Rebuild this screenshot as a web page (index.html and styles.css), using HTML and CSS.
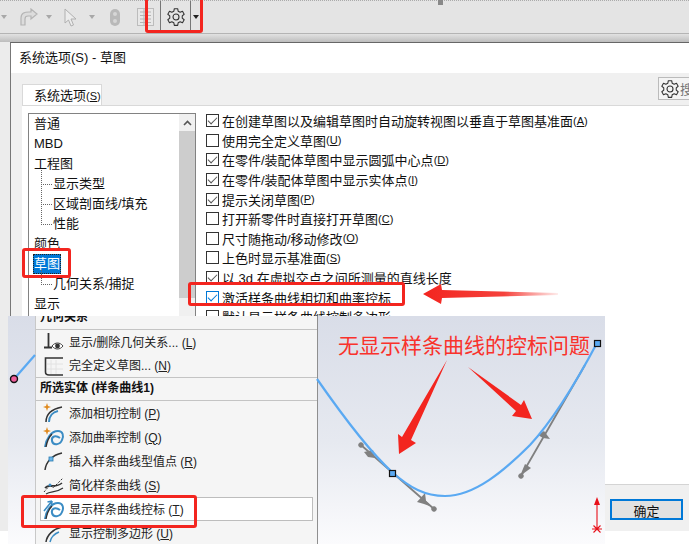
FILE: index.html
```html
<!DOCTYPE html>
<html lang="zh-CN">
<head>
    <meta charset="UTF-8">
    <title>系统选项(S) - 草图</title>
    <link rel="stylesheet" href="styles.css">
</head>
<body>
    <div class="desktop">
        <div class="toolbar">
            <span class="caret caret-first"></span>
            <svg class="tool tool-redo" width="20" height="18" viewBox="0 0 20 18">
                <path d="M3 17 V10 C3 5 7 4 11 4 H13 V1 L19 6 L13 11 V8 H10 C8 8 7 9 7 11 V17 Z" fill="#dcdcdc" stroke="#b4b4b4" stroke-width="1.2"/>
            </svg>
            <span class="caret caret-redo"></span>
            <svg class="tool tool-cursor" width="14" height="19" viewBox="0 0 14 19">
                <path d="M1 1 V15 L4.5 12 L7 18 L9.5 17 L7 11 H12 Z" fill="#ececec" stroke="#b0b0b0"/>
            </svg>
            <span class="caret caret-cursor"></span>
            <span class="pill"><i></i><i></i></span>
            <svg class="tool tool-list" width="17" height="18" viewBox="0 0 17 18">
                <rect x="0.5" y="0.5" width="16" height="17" fill="#e8e8e8" stroke="#bcbcbc"/>
                <path d="M3 4 H14 M3 7.5 H14 M3 11 H14 M3 14.5 H14 M7 1 V17" stroke="#b4b4b4" fill="none"/>
            </svg>
            <span class="tool-split">
                <svg width="20" height="20" viewBox="0 0 24 24">
                    <use href="#gear"/>
                </svg>
            </span>
            <span class="caret caret-dark"></span>
            <span class="ruler-tick"></span>
        </div>
        <div class="shade"></div>

        <div class="dialog">
            <div class="titlebar">系统选项(S) - 草图</div>
            <div class="tabs">
                <div class="tab">系统选项<small>(<u>S</u>)</small></div>
                <div class="search">
                    <svg width="20" height="20" viewBox="0 0 24 24">
                        <use href="#gear"/>
                    </svg>
                    <span>搜</span>
                </div>
            </div>
            <div class="page">
                <div class="tree">
                    <div class="tree-rows">
                        <div class="node">普通</div>
                        <div class="node">MBD</div>
                        <div class="node">工程图</div>
                        <div class="node child first">显示类型</div>
                        <div class="node child">区域剖面线/填充</div>
                        <div class="node child">性能</div>
                        <div class="node">颜色</div>
                        <div class="node"><span class="selected">草图</span></div>
                        <div class="node child only">几何关系/捕捉</div>
                        <div class="node">显示</div>
                        <div class="node">选择</div>
                    </div>
                    <div class="scrollbar">
                        <div class="scroll-up">
                            <svg width="9" height="6" viewBox="0 0 9 6"><path d="M1 5 L4.5 1.5 L8 5" fill="none" stroke="#555" stroke-width="1.6"/></svg>
                        </div>
                        <div class="scroll-thumb"></div>
                    </div>
                </div>
                <div class="options">
                    <div class="option"><span class="box on"></span>在创建草图以及编辑草图时自动旋转视图以垂直于草图基准面<small>(<u>A</u>)</small></div>
                    <div class="option"><span class="box"></span>使用完全定义草图<small>(<u>U</u>)</small></div>
                    <div class="option"><span class="box on"></span>在零件/装配体草图中显示圆弧中心点<small>(<u>D</u>)</small></div>
                    <div class="option"><span class="box on"></span>在零件/装配体草图中显示实体点<small>(<u>I</u>)</small></div>
                    <div class="option"><span class="box on"></span>提示关闭草图<small>(<u>P</u>)</small></div>
                    <div class="option"><span class="box"></span>打开新零件时直接打开草图<small>(<u>C</u>)</small></div>
                    <div class="option"><span class="box"></span>尺寸随拖动/移动修改<small>(<u>O</u>)</small></div>
                    <div class="option"><span class="box"></span>上色时显示基准面<small>(<u>S</u>)</small></div>
                    <div class="option"><span class="box on"></span>以 3d 在虚拟交点之间所测量的直线长度</div>
                    <div class="option"><span class="box on focus"></span>激活样条曲线相切和曲率控标</div>
                    <div class="option"><span class="box"></span>默认显示样条曲线控制多边形</div>
                </div>
            </div>
            <div class="footer">
                <button class="ok">确定</button>
            </div>
        </div>
    </div>

    <div class="viewport">
        <div class="menu">
            <div class="menu-clip">
                <div class="menu-head clipped">几何关系</div>
            </div>
            <div class="menu-item">
                <svg width="22" height="22" viewBox="0 0 22 22">
                    <path d="M5.5 2 V16 M1 16.5 H9" stroke="#333" stroke-width="1.8" fill="none"/>
                    <path d="M9 15 C12 11 17 11 20 15 C17 19 12 19 9 15 Z" fill="#fff" stroke="#444"/>
                    <circle cx="14.5" cy="15" r="2.4" fill="#333"/>
                </svg>
                <span>显示/删除几何关系... (<u>L</u>)</span>
            </div>
            <div class="menu-item">
                <svg width="22" height="22" viewBox="0 0 22 22">
                    <path d="M8 5 V19 M13 5 V19 M4 9 H20 M4 14 H20" stroke="#e2e2e2" fill="none"/>
                    <path d="M20 3 H2.500 V17 C2.500 19 4 20 6 20 H20" stroke="#333" stroke-width="1.6" fill="none"/>
                </svg>
                <span>完全定义草图... (<u>N</u>)</span>
            </div>
            <div class="menu-head">所选实体 (样条曲线1)</div>
            <div class="menu-item">
                <svg width="22" height="22" viewBox="0 0 22 22">
                    <path d="M3 20 C3 12 9 7 19 5" stroke="#333" stroke-width="1.5" fill="none"/>
                    <path d="M6 20 C6 14 10 10 15 9" stroke="#3b8cc4" stroke-width="2" fill="none"/>
                    <path d="M4 1 L5 4 L8 5 L5 6 L4 9 L3 6 L0 5 L3 4 Z" fill="#e08a1e"/>
                </svg>
                <span>添加相切控制 (<u>P</u>)</span>
            </div>
            <div class="menu-item">
                <svg width="22" height="22" viewBox="0 0 22 22">
                    <use href="#spline-loop"/>
                    <path d="M4 1 L5 4 L8 5 L5 6 L4 9 L3 6 L0 5 L3 4 Z" fill="#e08a1e"/>
                </svg>
                <span>添加曲率控制 (<u>Q</u>)</span>
            </div>
            <div class="menu-item">
                <svg width="22" height="22" viewBox="0 0 22 22">
                    <path d="M2 20 C3 12 9 5 19 3" stroke="#333" stroke-width="1.5" fill="none"/>
                    <rect x="6" y="7" width="4" height="4" fill="#6bb6ea" stroke="#2a7ab0" stroke-width="0.8"/>
                </svg>
                <span>插入样条曲线型值点 (<u>R</u>)</span>
            </div>
            <div class="menu-item">
                <svg width="22" height="22" viewBox="0 0 22 22">
                    <path d="M1 18 L7 11 L10 14 L20 4" stroke="#333" stroke-dasharray="2 1.500" fill="none"/>
                    <path d="M2 14 C6 9 12 15 19 9" stroke="#333" stroke-width="1.6" fill="none"/>
                    <path d="M3 20 C8 17 13 19 20 14" stroke="#333" stroke-width="1.2" fill="none"/>
                    <circle cx="7" cy="11" r="1.500" fill="#3b8cc4"/>
                </svg>
                <span>简化样条曲线 (<u>S</u>)</span>
            </div>
            <div class="menu-item active">
                <svg width="22" height="22" viewBox="0 0 22 22">
                    <use href="#spline-loop"/>
                    <path d="M1 13 L9 3 M9 3 L4.500 4 M9 3 L8.500 7.500" stroke="#3b8cc4" stroke-width="1.6" fill="none"/>
                </svg>
                <span>显示样条曲线控标 (<u>T</u>)</span>
            </div>
            <div class="menu-item">
                <svg width="22" height="22" viewBox="0 0 22 22">
                    <path d="M3 20 C4 13 10 7 19 5" stroke="#333" stroke-width="1.5" fill="none"/>
                    <path d="M7 20 C8 15 11 12 16 10" stroke="#3b8cc4" stroke-width="1.5" fill="none"/>
                </svg>
                <span>显示控制多边形 (<u>U</u>)</span>
            </div>
        </div>
    </div>

    <svg class="overlay" width="689" height="544" viewBox="0 0 689 544">
        <defs>
            <g id="gear">
                <path d="M10 2 H14 L14.600 5 L17 6.300 L19.800 5.200 L21.800 8.700 L19.500 10.600 V13.400 L21.800 15.300 L19.800 18.800 L17 17.700 L14.600 19 L14 22 H10 L9.400 19 L7 17.700 L4.200 18.800 L2.200 15.300 L4.500 13.400 V10.600 L2.200 8.700 L4.200 5.200 L7 6.300 L9.400 5 Z" fill="none" stroke="#333" stroke-width="1.300" stroke-linejoin="round"/>
                <circle cx="12" cy="12" r="3.600" fill="none" stroke="#333" stroke-width="1.300"/>
            </g>
            <g id="spline-loop">
                <path d="M2 21 C3 13 8 5 15 5 C20 5 21 10 19 14 C17 19 10 20 9 15 C8 10 13 9 17 12" stroke="#3b8cc4" stroke-width="2" fill="none"/>
                <path d="M3 21 C4 15 6 11 9 8" stroke="#333" stroke-width="1.400" fill="none"/>
            </g>
            <linearGradient id="fade" x1="0" x2="1" y1="0" y2="0">
                <stop offset="0" stop-color="#f3251f"/>
                <stop offset="0.6" stop-color="#f5423c"/>
                <stop offset="1" stop-color="#f5423c" stop-opacity="0.1"/>
            </linearGradient>
        </defs>

        <g fill="#808080" stroke="#808080">
            <path d="M361 445 L434 509 M585 365 L521 476" fill="none" stroke-width="1.800"/>
            <circle cx="361" cy="445" r="2.300"/>
            <circle cx="434" cy="509" r="2.300"/>
            <circle cx="521" cy="476" r="2.300"/>
            <polygon points="364,452 373,450 375,458 368,457" stroke="none"/>
            <polygon points="417,502 425,493 426,501 432,507 424,504" stroke="none"/>
            <polygon points="538,435 544,431 550,439 543,438" stroke="none"/>
            <polygon points="520,476 525,464 531,468" stroke="none"/>
        </g>

        <path class="spline" d="M14 379 L35 355"/>
        <circle cx="14" cy="379" r="3.500" fill="#ee5d9b" stroke="#111" stroke-width="1.400"/>
        <path class="spline" d="M317 379 C340 412 370 452 392 472 C410 488 425 496 445 496 C475 496 505 470 530 445 C555 418 580 375 597 343"/>

        <rect x="389.500" y="470.500" width="6" height="6" fill="#5aa9f2" stroke="#111" stroke-width="1.200"/>
        <rect x="594.500" y="340.500" width="6" height="6" fill="#5aa9f2" stroke="#111" stroke-width="1.200"/>

        <path d="M597 504 V529 M592 529 H602 M593.500 525.500 L600.500 532.500 M600.500 525.500 L593.500 532.500" stroke="#e8101a" stroke-width="1.100" fill="none"/>
        <path d="M597 497 L600 505 H594 Z" fill="#e8101a"/>

        <polygon points="447,360 411,440 416,443 399,454 398,434 402,437" fill="#f3251f"/>
        <polygon points="468,367 521,405 524,400 532,419 512,416 516,411" fill="#f3251f"/>
        <polygon points="423,294 441,284 442,290 558,293 558,295 442,298 441,304" fill="url(#fade)"/>
    </svg>

    <div class="note">无显示样条曲线的控标问题</div>
    <div class="mark mark-tool"></div>
    <div class="mark mark-node"></div>
    <div class="mark mark-option"></div>
    <div class="mark mark-menu"></div>
</body>
</html>
```

FILE: styles.css
```css
* {
    box-sizing: border-box;
}
body {
    margin: 0;
    width: 689px;
    height: 544px;
    overflow: hidden;
    position: relative;
    background-color: #fff;
    color: #111;
    font-family: "Liberation Sans", "Noto Sans CJK SC", sans-serif;
    font-size: 13px;
}
small {
    font-size: 11px;
}

/* window behind the dialog */
.desktop {
    height: 531px;
    background-color: #ececec;
    overflow: hidden;
}
.toolbar {
    height: 34px;
    display: flex;
    align-items: center;
    position: relative;
    background-color: #e4e4e4;
    border-top: 1px dotted #aaa;
    border-bottom: 1px solid #b4b4b4;
}
.caret {
    width: 0;
    height: 0;
    margin-right: 1px;
    border-left: 3px solid transparent;
    border-right: 3px solid transparent;
    border-top: 4px solid #a8a8a8;
}
.caret-first {
    margin-left: 1px;
}
.tool-redo {
    margin-left: 10px;
}
.caret-redo {
    margin-left: 8px;
}
.tool-cursor {
    margin-left: 11px;
}
.caret-cursor {
    margin-left: 11px;
}
.pill {
    width: 10px;
    height: 17px;
    margin-left: 14px;
    border-radius: 5px;
    background-color: #b9b9b9;
    display: flex;
    flex-direction: column;
    justify-content: space-evenly;
    align-items: center;
}
.pill i {
    width: 4px;
    height: 4px;
    border-radius: 50%;
    background-color: #d6d6d6;
}
.tool-list {
    margin-left: 17px;
}
.tool-split {
    width: 31px;
    height: 32px;
    margin-left: 6px;
    display: flex;
    align-items: center;
    justify-content: center;
    border-left: 1px solid #777;
    border-right: 1px solid #777;
}
.caret-dark {
    margin-left: 2px;
    border-top-color: #222;
}
.ruler-tick {
    width: 5px;
    height: 5px;
    position: absolute;
    left: 438px;
    top: -1px;
    background-color: #888;
}
.shade {
    height: 8px;
    background: linear-gradient(#e2e2e2, #bdbdbd);
}

/* options dialog */
.dialog {
    height: 489px;
    margin-left: 10px;
    background-color: #f0f0f0;
    border-left: 1px solid #777;
    border-top: 1px solid #666;
    display: flex;
    flex-direction: column;
}
.titlebar {
    height: 30px;
    padding: 6px 0 0 8px;
    background-color: #fff;
    line-height: 18px;
}
.tabs {
    height: 32px;
    padding-left: 11px;
    display: flex;
    flex-shrink: 0;
    overflow: hidden;
}
.tab {
    width: 80px;
    height: 21px;
    margin-top: 11px;
    padding-left: 11px;
    line-height: 21px;
    white-space: nowrap;
    background-color: #fff;
    border: 1px solid #d9d9d9;
    border-bottom: none;
}
.search {
    width: 31px;
    height: 23px;
    margin: 4px 0 0 auto;
    flex-shrink: 0;
    display: flex;
    align-items: center;
    padding-left: 1px;
    overflow: hidden;
    white-space: nowrap;
    color: #777;
    background-color: #f4f4f4;
    border: 1px solid #bbb;
    border-right: none;
}
.search svg {
    flex-shrink: 0;
}
.page {
    flex: 1;
    min-height: 0;
    margin-left: 11px;
    padding: 7px 0 0 6px;
    display: flex;
    align-items: flex-start;
    background-color: #fff;
    border-top: 1px solid #d9d9d9;
}
.tree {
    width: 168px;
    height: 204px;
    overflow: hidden;
    flex-shrink: 0;
    display: flex;
    border: 1px solid #828282;
    border-bottom: none;
}
.tree-rows {
    flex: 1;
    padding-left: 5px;
}
.node {
    height: 20px;
    line-height: 20px;
    position: relative;
}
.child {
    padding-left: 19px;
}
.child::before {
    content: "";
    position: absolute;
    left: 7px;
    top: -10px;
    width: 10px;
    height: 20px;
    border-left: 1px dotted #666;
    border-bottom: 1px dotted #666;
}
.child.only::before,
.child.first::before {
    top: -4px;
    height: 14px;
}
.selected {
    display: inline-block;
    padding: 0 1px;
    height: 20px;
    margin-left: -1px;
    color: #fff;
    background-color: #0078d7;
    outline: 1px dotted #222;
    outline-offset: -1px;
}
.scrollbar {
    width: 16px;
    background-color: #f0f0f0;
    flex-shrink: 0;
}
.scroll-up {
    height: 17px;
    display: flex;
    align-items: center;
    justify-content: center;
}
.scroll-thumb {
    height: 167px;
    background-color: #cdcdcd;
}
.options {
    height: 205px;
    overflow: hidden;
    margin: -2px 0 0 10px;
}
.option {
    height: 19.6px;
    display: flex;
    align-items: center;
    white-space: nowrap;
}
.box {
    width: 13px;
    height: 13px;
    margin-right: 3px;
    flex-shrink: 0;
    position: relative;
    background-color: #fff;
    border: 1px solid #333;
}
.box.on::after {
    content: "";
    position: absolute;
    left: 3px;
    top: 0;
    width: 4px;
    height: 8px;
    border: solid #555;
    border-width: 0 1.5px 1.5px 0;
    transform: rotate(45deg);
}
.box.focus {
    border-color: #0078d7;
}
.box.focus::after {
    border-color: #0078d7;
}
.footer {
    height: 47px;
    padding: 14px 6px 0 0;
    margin-top: auto;
    display: flex;
    justify-content: flex-end;
    align-items: flex-start;
    border-top: 1px solid #d4d4d4;
}
.ok {
    width: 73px;
    height: 21px;
    padding: 0;
    font: inherit;
    color: #111;
    background-color: #e1e1e1;
    border: 2px solid #0078d7;
}

/* pasted picture of the sketch, lies over the dialog */
.viewport {
    position: absolute;
    left: 8px;
    top: 316px;
    width: 597px;
    height: 228px;
    padding-left: 27px;
    background: linear-gradient(#d9dde8, #e6e9f0 55%, #fbfbfd);
}
.menu {
    width: 283px;
    height: 228px;
    overflow: hidden;
    font-size: 12px;
    color: #222;
    background-color: #f5f5f5;
    border-left: 1px solid #c8c8c8;
    border-right: 1px solid #8f8f8f;
}
.menu-clip {
    height: 14px;
    overflow: hidden;
    border-bottom: 1px solid #c4c4c4;
}
.menu-head {
    height: 23px;
    padding-left: 4px;
    line-height: 21px;
    font-weight: bold;
    color: #111;
    border-bottom: 1px solid #c4c4c4;
}
.menu-head.clipped {
    height: 13px;
    line-height: 3px;
    border-bottom: none;
}
.menu-item {
    height: 24px;
    padding-left: 7px;
    display: flex;
    align-items: center;
    gap: 4px;
}
.menu-item span {
    margin-top: -2px;
}
.menu-item:nth-child(3) {
    border-bottom: 1px solid #c4c4c4;
}
.menu-item.active {
    margin: 0 4px;
    padding-left: 2px;
    background-color: #fff;
    border: 1px solid #bdbdbd;
}

/* hand drawn annotations on top */
.overlay {
    position: absolute;
    left: 0;
    top: 0;
    pointer-events: none;
}
.spline {
    fill: none;
    stroke: #5aa9f2;
    stroke-width: 2.2;
}
.note {
    position: absolute;
    left: 338px;
    top: 331px;
    font-size: 21px;
    line-height: 29px;
    white-space: nowrap;
    color: #f9322c;
}
.mark {
    position: absolute;
    border: 3px solid #f3251f;
    border-radius: 3px;
}
.mark-tool {
    left: 145px;
    top: -3px;
    width: 58px;
    height: 36px;
}
.mark-node {
    left: 22px;
    top: 248px;
    width: 49px;
    height: 30px;
}
.mark-option {
    left: 188px;
    top: 282px;
    width: 217px;
    height: 24px;
}
.mark-menu {
    left: 21px;
    top: 495px;
    width: 176px;
    height: 33px;
}
```
